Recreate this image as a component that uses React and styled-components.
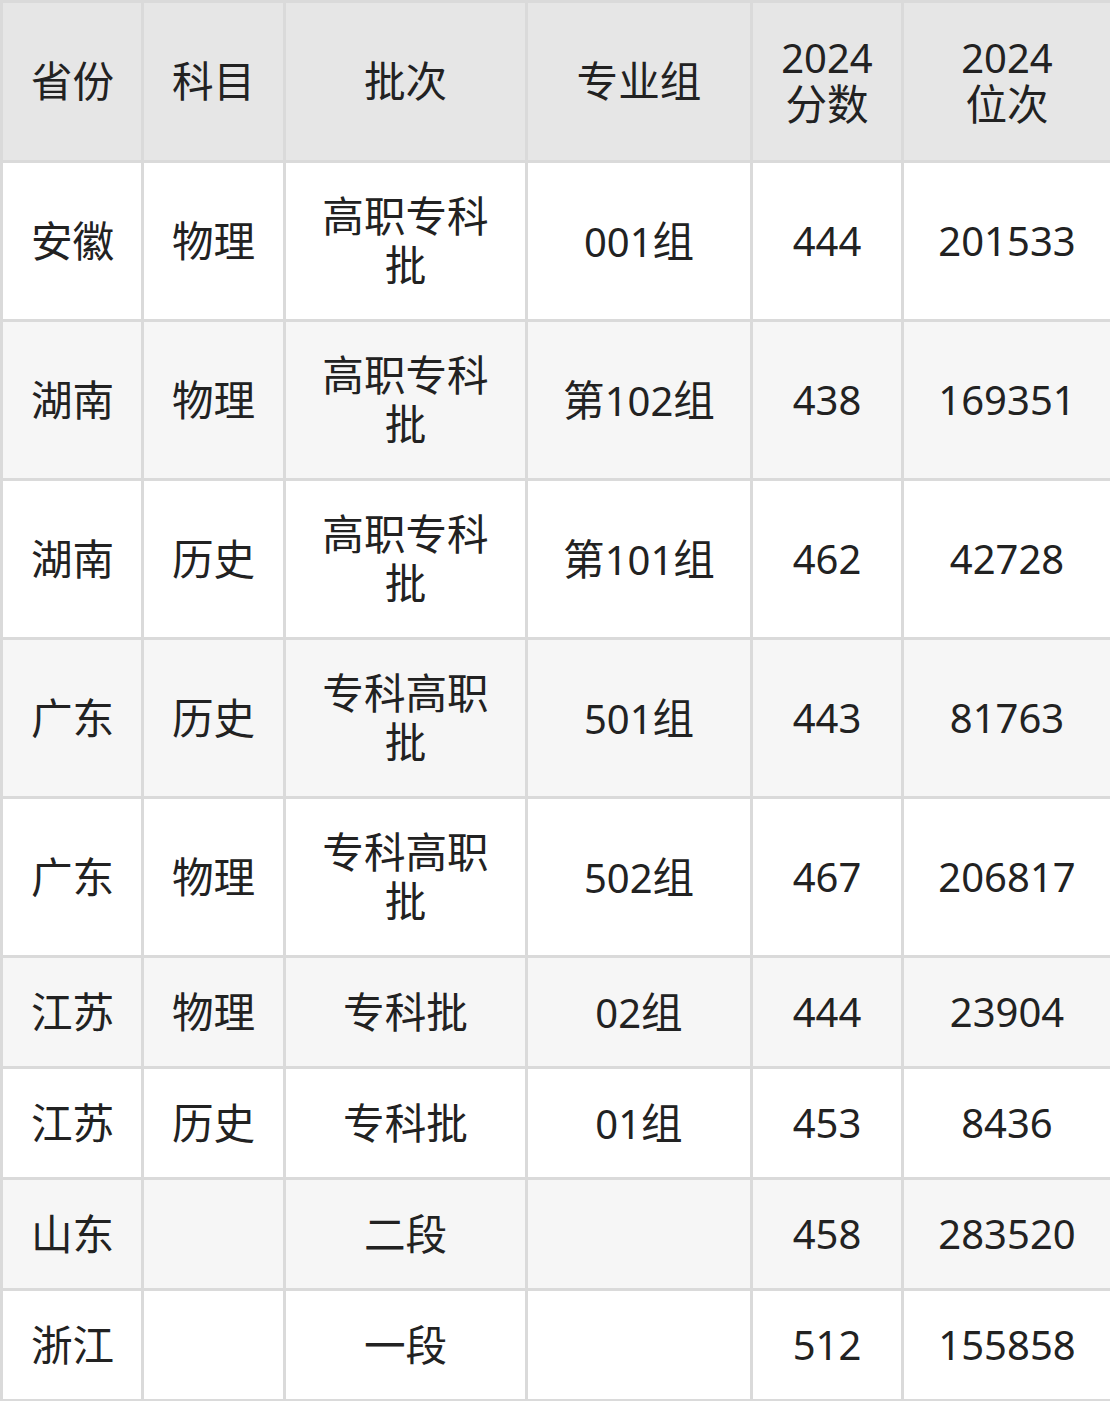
import React from 'react'
import styled, { createGlobalStyle } from 'styled-components'

const GlobalStyle = createGlobalStyle`
  html, body {
    margin: 0;
    padding: 0;
    background: #ffffff;
  }
  body {
    font-family: "Noto Sans", "Noto Sans CJK SC", sans-serif;
    color: #222222;
  }
`

const columns = [141, 142, 242, 225, 151, 209]

const rows = [
  { province: '安徽', subject: '物理', batch: '高职专科批', group: '001组', score: '444', rank: '201533', tall: true },
  { province: '湖南', subject: '物理', batch: '高职专科批', group: '第102组', score: '438', rank: '169351', tall: true },
  { province: '湖南', subject: '历史', batch: '高职专科批', group: '第101组', score: '462', rank: '42728', tall: true },
  { province: '广东', subject: '历史', batch: '专科高职批', group: '501组', score: '443', rank: '81763', tall: true },
  { province: '广东', subject: '物理', batch: '专科高职批', group: '502组', score: '467', rank: '206817', tall: true },
  { province: '江苏', subject: '物理', batch: '专科批', group: '02组', score: '444', rank: '23904' },
  { province: '江苏', subject: '历史', batch: '专科批', group: '01组', score: '453', rank: '8436' },
  { province: '山东', subject: '', batch: '二段', group: '', score: '458', rank: '283520' },
  { province: '浙江', subject: '', batch: '一段', group: '', score: '512', rank: '155858' },
]

const Table = styled.table`
  width: 1110px;
  border-collapse: collapse;
  table-layout: fixed;
  border: 3px solid #dadada;
`

const HeadRow = styled.tr`
  height: 160px;
  background: #e6e6e6;
`

const Row = styled.tr`
  height: ${p => (p.$tall ? '159px' : '111px')};
  background: ${p => (p.$striped ? '#f6f6f6' : '#ffffff')};
`

const Th = styled.th`
  border: 3px solid #dadada;
  font-weight: 400;
  font-size: 40px;
  line-height: 46px;
  color: #222222;
  text-align: center;
  vertical-align: middle;
  padding: 0 4px;
`

const Td = styled.td`
  border: 3px solid #dadada;
  font-size: 40px;
  line-height: 48px;
  color: #222222;
  text-align: center;
  vertical-align: middle;
  padding: 0 ${p => (p.$wide ? '34px' : '4px')};
  word-break: break-all;
`

const ProvinceTd = styled(Td)`
  text-align: left;
  padding-left: 28px;
  padding-right: 0;
`

const ProvinceTh = styled(Th)`
  text-align: left;
  padding-left: 28px;
  padding-right: 0;
`

// CJK glyphs in the reference sit a touch larger than the digits
const Han = styled.span`
  font-size: 41.6px;
`

function Mixed({ text }) {
  const parts = text.match(/[\u3400-\u9fff]+|[^\u3400-\u9fff]+/g) || []
  return parts.map((part, i) =>
    /[\u3400-\u9fff]/.test(part) ? <Han key={i}>{part}</Han> : <React.Fragment key={i}>{part}</React.Fragment>
  )
}

export default function App() {
  return (
    <>
      <GlobalStyle />
      <Table>
        <colgroup>
          {columns.map((w, i) => (
            <col key={i} style={{ width: w }} />
          ))}
        </colgroup>
        <thead>
          <HeadRow>
            <ProvinceTh><Han>省份</Han></ProvinceTh>
            <Th><Han>科目</Han></Th>
            <Th><Han>批次</Han></Th>
            <Th><Han>专业组</Han></Th>
            <Th>2024<br /><Han>分数</Han></Th>
            <Th>2024<br /><Han>位次</Han></Th>
          </HeadRow>
        </thead>
        <tbody>
          {rows.map((r, i) => (
            <Row key={i} $tall={r.tall} $striped={i % 2 === 1}>
              <ProvinceTd><Mixed text={r.province} /></ProvinceTd>
              <Td><Mixed text={r.subject} /></Td>
              <Td $wide><Mixed text={r.batch} /></Td>
              <Td><Mixed text={r.group} /></Td>
              <Td>{r.score}</Td>
              <Td>{r.rank}</Td>
            </Row>
          ))}
        </tbody>
      </Table>
    </>
  )
}
